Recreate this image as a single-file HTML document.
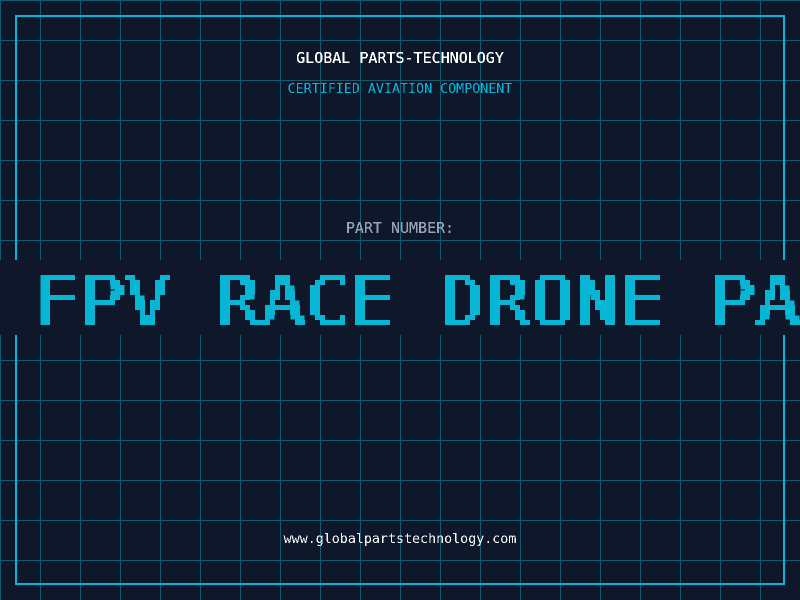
<!DOCTYPE html>
<html lang="en">
<head>
<meta charset="utf-8">
<title>Global Parts-Technology</title>
<style>
html,body{margin:0;padding:0;width:800px;height:600px;overflow:hidden;background:#0f172a}
svg{position:absolute;left:0;top:0;display:block}
text{font-family:"DejaVu Sans Mono",monospace;white-space:pre}
</style>
</head>
<body>
<svg width="800" height="600" viewBox="0 0 800 600" xmlns="http://www.w3.org/2000/svg">
<defs>
<pattern id="g" width="40" height="40" patternUnits="userSpaceOnUse">
<rect x="0" y="0" width="40" height="1" fill="#145a70"/>
<rect x="0" y="0" width="1" height="40" fill="#145a70"/>
</pattern>
<filter id="th" x="0" y="0" width="800" height="600" filterUnits="userSpaceOnUse" color-interpolation-filters="sRGB">
<feComponentTransfer><feFuncA type="discrete" tableValues="0 1"/></feComponentTransfer>
</filter>
<filter id="th2" x="0" y="0" width="800" height="600" filterUnits="userSpaceOnUse" color-interpolation-filters="sRGB">
<feComponentTransfer><feFuncA type="discrete" tableValues="0 1 1 1"/></feComponentTransfer>
</filter>
<filter id="px" x="0" y="260" width="800" height="75" filterUnits="userSpaceOnUse" primitiveUnits="userSpaceOnUse" color-interpolation-filters="sRGB">
<feOffset in="SourceGraphic" dx="2" dy="0" result="o"/>
<feMerge result="s"><feMergeNode in="SourceGraphic"/><feMergeNode in="o"/></feMerge>
<feFlood x="2" y="262" width="1" height="1" flood-color="#000"/>
<feComposite x="0" y="260" width="5" height="5"/>
<feTile x="0" y="260" width="800" height="75" result="a"/>
<feComposite in="s" in2="a" operator="in"/>
<feMorphology operator="dilate" radius="2"/>
<feComponentTransfer><feFuncA type="discrete" tableValues="0 1"/></feComponentTransfer>
</filter>
</defs>
<rect width="800" height="600" fill="#0f172a"/>
<rect width="800" height="600" fill="url(#g)"/>
<rect x="16" y="16" width="768" height="568" fill="none" stroke="#06b6d4" stroke-width="2"/>
<rect x="0" y="260" width="800" height="75" fill="#0f172a"/>
<g filter="url(#th2)">
<text x="400" y="63" text-anchor="middle" font-size="15" fill="#ffffff">GLOBAL PARTS-TECHNOLOGY</text>
<text x="400" y="233" text-anchor="middle" font-size="15" fill="#94a3b8">PART NUMBER:</text>
</g>
<g filter="url(#th)">
<text x="400" y="93" text-anchor="middle" font-size="13.33" fill="#06b6d4">CERTIFIED AVIATION COMPONENT</text>
<text x="400" y="543" text-anchor="middle" font-size="13.33" fill="#f1f5f9">www.globalpartstechnology.com</text>
</g>
<g filter="url(#px)">
<text transform="translate(0 325) scale(1 0.915)" x="34 79 124 169 214 259 304 349 394 439 484 529 574 619 664 709 754" y="0" font-size="75" fill="#06b6d4">FPV RACE DRONE PA</text>
</g>
</svg>
</body>
</html>
